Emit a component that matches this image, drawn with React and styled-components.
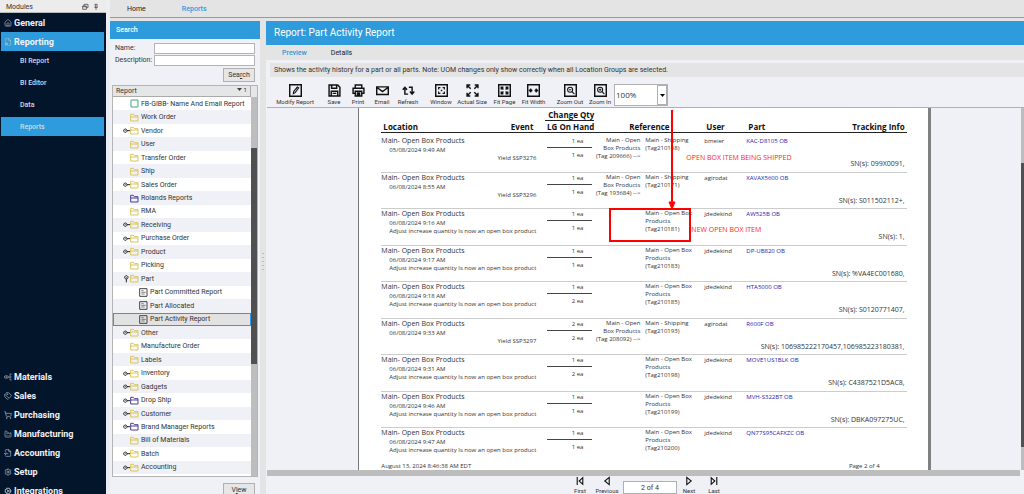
import styled, { createGlobalStyle } from "styled-components";
import { useState } from "react";
import { House, FileCog, Tags, ShoppingCart, Factory, FileOutput, Settings, Cog } from "lucide-react";

const BLUE = "#2d9bdc";
const PANEL = "#eff1f6";
const GREY = "#e4e4e4";

const GlobalStyle = createGlobalStyle`
    *{
        box-sizing:border-box;
    }
    body{
        margin:0;
        background:${GREY};
        color:#333;
        font-family:Roboto, "Liberation Sans", sans-serif;
        font-size:7px;
        line-height:10px;
    }
    button, input, select{
        font:inherit;
        color:inherit;
        margin:0;
        padding:0;
        border:0;
        border-radius:0;
        background:none;
    }
    ul{
        list-style:none;
        margin:0;
        padding:0;
    }
    h1, h2{
        margin:0;
    }
`;

const MaterialsIcon = () => (
    <svg width="8" height="8" viewBox="0 0 24 24" fill="none" stroke="currentColor" strokeWidth="2">
        <ellipse cx="7" cy="12" rx="6" ry="4"/>
        <circle cx="7" cy="12" r="1"/>
        <path d="M13 12h4M23 3h-5v18h5M18 12h5"/>
    </svg>
);

const topModules = [
    { name: "General", Icon: House },
    { name: "Reporting", Icon: FileCog }
];

const subModules = ["BI Report", "BI Editor", "Data", "Reports"];

const bottomModules = [
    { name: "Materials", Icon: MaterialsIcon },
    { name: "Sales", Icon: Tags },
    { name: "Purchasing", Icon: ShoppingCart },
    { name: "Manufacturing", Icon: Factory },
    { name: "Accounting", Icon: FileOutput },
    { name: "Setup", Icon: Settings },
    { name: "Integrations", Icon: Cog }
];

const YELLOW = "#dcc45c";
const PURPLE = "#4c3f94";

const tree = [
    { name: "FB-GIBB- Name And Email Report", icon: "sheet" },
    { name: "Work Order" },
    { name: "Vendor", closed: true },
    { name: "User" },
    { name: "Transfer Order" },
    { name: "Ship" },
    { name: "Sales Order", closed: true },
    { name: "Rolands Reports", color: PURPLE },
    { name: "RMA" },
    { name: "Receiving", closed: true },
    { name: "Purchase Order", closed: true },
    { name: "Product", closed: true },
    { name: "Picking" },
    { name: "Part", open: true },
    { name: "Part Committed Report", icon: "report" },
    { name: "Part Allocated", icon: "report" },
    { name: "Part Activity Report", icon: "report" },
    { name: "Other", closed: true },
    { name: "Manufacture Order" },
    { name: "Labels" },
    { name: "Inventory", closed: true },
    { name: "Gadgets", closed: true },
    { name: "Drop Ship", closed: true, color: PURPLE },
    { name: "Customer", closed: true },
    { name: "Brand Manager Reports", closed: true, color: PURPLE },
    { name: "Bill of Materials" },
    { name: "Batch", closed: true },
    { name: "Accounting", closed: true }
];

const adjust = "Adjust increase quantity Is now an open box product";

const rows = [
    { time: "05/08/2024 9:49 AM", event: "Yield SSP3276", qty: "1 ea", hand: "1 ea", from: "209666", tag: "210168", user: "bmeier", part: "KAC-D8105 OB", sn: "099X0091," },
    { time: "06/08/2024 8:55 AM", event: "Yield SSP3296", qty: "1 ea", hand: "1 ea", from: "193684", tag: "210171", user: "agirodat", part: "XAVAX5600 OB", sn: "S011502112+," },
    { time: "06/08/2024 9:16 AM", event: adjust, qty: "1 ea", hand: "1 ea", tag: "210181", user: "jdedekind", part: "AW525B OB", sn: "1," },
    { time: "06/08/2024 9:17 AM", event: adjust, qty: "1 ea", hand: "1 ea", tag: "210183", user: "jdedekind", part: "DP-UB820 OB", sn: "%VA4EC001680," },
    { time: "06/08/2024 9:18 AM", event: adjust, qty: "1 ea", hand: "2 ea", tag: "210185", user: "jdedekind", part: "HTA5000 OB", sn: "S0120771407," },
    { time: "06/08/2024 9:33 AM", event: "Yield SSP3297", qty: "2 ea", hand: "2 ea", from: "208092", tag: "210193", user: "agirodat", part: "R600F OB", sn: "106985222170457,106985223180381," },
    { time: "06/08/2024 9:31 AM", event: adjust, qty: "1 ea", hand: "2 ea", tag: "210198", user: "jdedekind", part: "MOVE1US1BLK OB", sn: "C4387521D5AC8," },
    { time: "06/08/2024 9:46 AM", event: adjust, qty: "1 ea", hand: "1 ea", tag: "210199", user: "jdedekind", part: "MVH-S322BT OB", sn: "DBKA097275UC," },
    { time: "06/08/2024 9:47 AM", event: adjust, qty: "1 ea", hand: "1 ea", tag: "210200", user: "jdedekind", part: "QN77S95CAFXZC OB" }
];

// toolbar drawings, all on a 36 unit grid
const frame = <path d="M2 2h32v32H2z" strokeWidth="4"/>;
const arrows = "M15 15L9 9M9 15V9h6M21 15l6-6M21 9h6v6M15 21l-6 6M9 21v6h6M21 21l6 6M27 21v6h-6";

const drawings = {
    modify: <>{frame}<path d="M12 27l1-6L23 8l4 3-10 13zM20 12l4 3" strokeWidth="3"/></>,
    save: <path d="M3 3h24l6 6v24H3zM10 4v8h14V4M9 33V20h18v13M13 26h10" strokeWidth="4"/>,
    print: <path d="M9 11V3h18v8M9 26H3V12h30v14h-6M9 20h18v13H9zM13 25h10M13 29h10" strokeWidth="4"/>,
    email: <path d="M2 8h32v21H2zM2 9l16 12L34 9" strokeWidth="4"/>,
    refresh: <path d="M17 28H8V10M2 16l6-7 6 7M19 9h9v18M22 21l6 7 6-7" strokeWidth="4"/>,
    window: <>{frame}<path d="M10 15v-5h5M26 15v-5h-5M10 21v5h5M26 21v5h-5M16 20l4-4" strokeWidth="3"/></>,
    actual: <path d="M3 12V3h9M4 4l9 9M33 12V3h-9M32 4l-9 9M3 24v9h9M4 32l9-9M33 24v9h-9M32 32l-9-9" strokeWidth="4"/>,
    page: <>{frame}<path d={arrows} strokeWidth="4"/></>,
    width: <>{frame}<path d="M8 18h7M21 18h7M12 13l-5 5 5 5M24 13l5 5-5 5" strokeWidth="4"/></>,
    zoomOut: <>{frame}<circle cx="17" cy="16" r="7" strokeWidth="3"/><path d="M22 21l7 7M14 16h6" strokeWidth="3"/></>,
    zoomIn: <>{frame}<circle cx="17" cy="16" r="7" strokeWidth="3"/><path d="M22 21l7 7M14 16h6M17 13v6" strokeWidth="3"/></>,
    first: <path d="M8 4v28M28 6v24L15 18z" strokeWidth="4"/>,
    previous: <path d="M26 5v26L10 18z" strokeWidth="4"/>,
    next: <path d="M10 5v26l16-13z" strokeWidth="4"/>,
    last: <path d="M28 4v28M8 6v24l13-12z" strokeWidth="4"/>
};

const toolGroups = [
    [["modify", "Modify Report", 42]],
    [["save", "Save", 24], ["print", "Print", 24], ["email", "Email", 24], ["refresh", "Refresh", 28]],
    [["window", "Window", 26], ["actual", "Actual Size", 36], ["page", "Fit Page", 29], ["width", "Fit Width", 29]],
    [["zoomOut", "Zoom Out", 32], ["zoomIn", "Zoom In", 28]]
];

const Drawing = ({ name, size }) => (
    <svg width={size} height={size} viewBox="0 0 36 36" fill="none" stroke="#111">{drawings[name]}</svg>
);

const Folder = ({ color = YELLOW }) => (
    <svg width="9" height="9" viewBox="0 0 27 27" fill="none" stroke={color} strokeWidth="3">
        <path d="M2 24V4h8l3 4h11v16zM2 12h22"/>
    </svg>
);

const TreeIcon = ({ icon, color }) => {
    if (icon === "sheet") {
        return <svg width="9" height="9" viewBox="0 0 9 9"><path d="M1 1h7v7H1z" fill="#fff" stroke="#4aa57c"/></svg>;
    }
    if (icon === "report") {
        return (
            <svg width="9" height="9" viewBox="0 0 27 27" fill="none" stroke="#444" strokeWidth="3">
                <path d="M2 2h22v23H2z"/>
                <path d="M7 8h7M7 13h13M7 18h10" strokeWidth="2"/>
            </svg>
        );
    }
    return <Folder color={color}/>;
};

const Expander = ({ closed, open }) => (
    <svg width="7" height="9" viewBox="0 0 21 27" fill="none" stroke="#222" strokeWidth="3">
        {closed && <path d="M12 14h9M7 9a5 5 0 1 0 .1 0M7 13v2"/>}
        {open && <path d="M10 15v10M10 5a5 5 0 1 0 .1 0M10 9v2"/>}
    </svg>
);

const Sidebar = () => {
    const [active, setActive] = useState("Reports");

    return (
        <SidebarBox>
            <ModulesBar>
                <span>Modules</span>
                <svg width="18" height="8" viewBox="0 0 54 24" fill="none" stroke="#333" strokeWidth="2">
                    <path d="M2 9h11v10H2zM6 9V4h12v10h-5M2 11h11M38 4h8M40 4v9M45 4v9M37 13h10M42 13v8"/>
                </svg>
            </ModulesBar>
            {topModules.map(({ name, Icon }) => (
                <ModuleButton key={name} $active={name === "Reporting"}><Icon size={8}/>{name}</ModuleButton>
            ))}
            <SubList>
                {subModules.map((name) => (
                    <SubButton key={name} $active={name === active} onClick={() => setActive(name)}>{name}</SubButton>
                ))}
            </SubList>
            <BottomList>
                {bottomModules.map(({ name, Icon }) => (
                    <ModuleButton key={name}><Icon size={8}/>{name}</ModuleButton>
                ))}
            </BottomList>
        </SidebarBox>
    );
};

const SearchPanel = () => {
    const [selected, setSelected] = useState("Part Activity Report");

    return (
        <SearchBox>
            <SearchTitle>Search</SearchTitle>
            <Form>
                <label htmlFor="name">Name:</label>
                <TextBox id="name"/>
                <label htmlFor="description">Description:</label>
                <TextBox id="description"/>
            </Form>
            <ButtonRow>
                <PushButton>Sea<u>r</u>ch</PushButton>
            </ButtonRow>
            <TreeBox>
                <TreeMain>
                    <TreeHead>
                        <span>Report</span>
                        <small>
                            <svg width="5" height="4" viewBox="0 0 5 4"><path d="M0 0h5L2.500 3z" fill="#345"/></svg> 1
                        </small>
                    </TreeHead>
                    <TreeList>
                        {tree.map((item) => (
                            <TreeItem key={item.name}>
                                <TreeButton
                                    $nested={item.icon === "report"}
                                    $selected={item.name === selected}
                                    onClick={() => setSelected(item.name)}
                                >
                                    <Expander closed={item.closed} open={item.open}/>
                                    <TreeIcon icon={item.icon} color={item.color}/>
                                    <span>{item.name}</span>
                                </TreeButton>
                            </TreeItem>
                        ))}
                        <TreePeek>
                            <TreeButton><Expander closed/><Folder color={PURPLE}/></TreeButton>
                        </TreePeek>
                    </TreeList>
                </TreeMain>
                <TreeScroll><i/><b/><i/></TreeScroll>
            </TreeBox>
            <ButtonRow $last>
                <PushButton>V<u>i</u>ew</PushButton>
            </ButtonRow>
        </SearchBox>
    );
};

const Report = () => (
    <Paper>
        <Table>
            <thead>
                <HeadRow>
                    <th>Location<span>Event</span></th>
                    <QtyHead><span>Change Qty</span>LG On Hand</QtyHead>
                    <RefHead>Reference</RefHead>
                    <th>User</th>
                    <th>Part<span>Tracking Info</span></th>
                </HeadRow>
            </thead>
            <tbody>
                {rows.map((row) => (
                    <Row key={row.tag}>
                        <Location>
                            <div>Main- Open Box Products</div>
                            <Small>{row.time}</Small>
                            <Event>{row.event}</Event>
                        </Location>
                        <Qty><div>{row.qty}</div><div>{row.hand}</div></Qty>
                        <Ref $right>
                            {row.from && <>Main - Open<br/>Box Products<br/>(Tag {row.from}) --&gt;</>}
                        </Ref>
                        <Ref>
                            {row.from ? <>Main - Shipping<br/></> : <>Main - Open Box<br/>Products<br/></>}
                            (Tag{row.tag})
                        </Ref>
                        <Small as="td">{row.user}</Small>
                        <Part>
                            <a href="#part">{row.part}</a>
                            {row.sn && <div>SN(s): {row.sn}</div>}
                        </Part>
                    </Row>
                ))}
            </tbody>
        </Table>
        <PaperFoot><span>August 13, 2024 8:46:38 AM EDT</span><span>Page 2 of 4</span></PaperFoot>
        <Arrow width="10" height="99" viewBox="0 0 10 99">
            <path d="M5 0v94" stroke="#f00" strokeWidth="2"/>
            <path d="M2 92h6L5 99z" fill="#f00" stroke="#f00"/>
        </Arrow>
        <Highlight/>
        <Note $x={327} $y={45}>OPEN BOX ITEM BEING SHIPPED</Note>
        <Note $x={332} $y={117}>NEW OPEN BOX ITEM</Note>
    </Paper>
);

const App = () => {
    const [page, setPage] = useState("2 of 4");

    return (
        <Wrapper>
            <GlobalStyle/>
            <Sidebar/>
            <Main>
                <TopTabs>
                    <TabButton>Home</TabButton>
                    <TabButton $active>Reports</TabButton>
                </TopTabs>
                <Body>
                    <SearchPanel/>
                    <Splitter/>
                    <Content>
                        <Title>Report: Part Activity Report</Title>
                        <ViewTabs>
                            <TabButton $active>Preview</TabButton>
                            <TabButton>Details</TabButton>
                        </ViewTabs>
                        <Info>Shows the activity history for a part or all parts. Note: UOM changes only show correctly when all Location Groups are selected.</Info>
                        <Toolbar>
                            {toolGroups.map((group) => (
                                <ToolGroup key={group[0][0]}>
                                    {group.map(([icon, label, width]) => (
                                        <ToolButton key={icon} $width={width}>
                                            <Drawing name={icon} size={13}/>
                                            {label}
                                        </ToolButton>
                                    ))}
                                    {group[0][0] === "zoomOut" && (
                                        <ZoomBox>
                                            <select aria-label="Zoom" defaultValue="100%">
                                                <option>50%</option>
                                                <option>100%</option>
                                                <option>200%</option>
                                            </select>
                                            <span><svg width="5" height="3" viewBox="0 0 5 3"><path d="M0 0h5L2.500 3z"/></svg></span>
                                        </ZoomBox>
                                    )}
                                </ToolGroup>
                            ))}
                        </Toolbar>
                        <Viewer>
                            <Canvas><Report/></Canvas>
                            <ViewerScroll><i/><b/><i/></ViewerScroll>
                        </Viewer>
                        <BottomScroll/>
                        <Pager>
                            <ToolButton $width={26}><Drawing name="first" size={10}/>First</ToolButton>
                            <ToolButton $width={28}><Drawing name="previous" size={10}/>Previous</ToolButton>
                            <PageInput aria-label="Page" value={page} onChange={(e) => setPage(e.target.value)}/>
                            <ToolButton $width={24}><Drawing name="next" size={10}/>Next</ToolButton>
                            <ToolButton $width={26}><Drawing name="last" size={10}/>Last</ToolButton>
                        </Pager>
                    </Content>
                </Body>
            </Main>
        </Wrapper>
    );
};

export default App;


const Wrapper = styled.div`
    display:flex;
    height:100vh;
    overflow:hidden;
`;

const SidebarBox = styled.nav`
    display:flex;
    flex-direction:column;
    flex:none;
    width:106px;
    background:#03152b;
`;

const ModulesBar = styled.div`
    display:flex;
    flex:none;
    justify-content:space-between;
    align-items:center;
    height:13px;
    padding:1px 6px 0;
    background:#ececec;
    border-bottom:1px solid #bbb;
`;

const ModuleButton = styled.button`
    display:flex;
    flex:none;
    align-items:center;
    gap:2px;
    height:19px;
    margin:0 2px 0 1px;
    padding-left:3px;
    background:${({ $active }) => ($active ? BLUE : "none")};
    color:#f0f2f5;
    font-size:9px;
    font-weight:700;

    svg{
        color:#a9b6c6;
    }
`;

const SubList = styled.div`
    display:flex;
    flex-direction:column;
    gap:3px;
    margin:0 2px 0 1px;
`;

const SubButton = styled.button`
    height:19px;
    padding-left:19px;
    text-align:left;
    font-weight:500;
    background:${({ $active }) => ($active ? BLUE : "none")};
    color:#d5dae1;
`;

const BottomList = styled.div`
    display:flex;
    flex-direction:column;
    margin:auto 0 -6px;
`;

const Main = styled.main`
    display:flex;
    flex:1;
    flex-direction:column;
    min-width:0;
    border-left:4px solid #eceef3;
`;

const TopTabs = styled.div`
    display:flex;
    flex:none;
    gap:36px;
    height:18px;
    padding-left:17px;
    border-bottom:1px solid #999;
`;

const TabButton = styled.button`
    font-weight:${({ $active }) => ($active ? 500 : 400)};
    color:${({ $active }) => ($active ? BLUE : "#222")};
`;

const Body = styled.div`
    display:flex;
    flex:1;
    min-height:0;
    padding-top:3px;
`;

const SearchBox = styled.section`
    display:flex;
    flex-direction:column;
    flex:none;
    width:150px;
    background:${PANEL};
`;

const SearchTitle = styled.h2`
    flex:none;
    padding:0 6px;
    background:${BLUE};
    color:#fff;
    font-size:7px;
    font-weight:500;
    line-height:18px;
`;

const Form = styled.div`
    display:grid;
    grid-template-columns:35px 1fr;
    gap:1px 4px;
    padding:4px 5px 2px;
`;

const TextBox = styled.input`
    min-width:0;
    height:11px;
    background:#fff;
    border:1px solid #b4b4b4;
`;

const ButtonRow = styled.div`
    display:flex;
    flex:none;
    justify-content:flex-end;
    height:17px;
    padding-top:${({ $last }) => ($last ? "6px" : "0")};
    padding-right:5px;
`;

const PushButton = styled.button`
    flex:none;
    width:32px;
    height:14px;
    background:#e6e6e6;
    border:1px solid #b0b0b0;
`;

const TreeBox = styled.div`
    display:flex;
    flex:1;
    min-height:0;
    margin:0 2px;
    border:1px solid #b4b4b4;
`;

const TreeMain = styled.div`
    display:flex;
    flex:1;
    flex-direction:column;
    min-width:0;
`;

const TreeHead = styled.div`
    display:flex;
    flex:none;
    justify-content:space-between;
    height:11px;
    padding:0 3px;
    background:#e6e6e6;
    border-bottom:1px solid #aaa;
    border-right:1px solid #aaa;

    small{
        font-size:6px;
        line-height:8px;
    }
`;

const TreeList = styled.ul`
    display:flex;
    flex:1;
    flex-direction:column;
    min-height:0;
`;

const TreeItem = styled.li`
    flex:1;
    min-height:0;
    background:#fff;

    &:nth-child(even){
        background:${PANEL};
    }
`;

const TreePeek = styled.li`
    flex:none;
    height:2px;
    overflow:hidden;
    background:#fff;

    button{
        height:12px;
    }
`;

const TreeButton = styled.button`
    display:flex;
    align-items:center;
    width:100%;
    height:100%;
    padding-left:${({ $nested }) => ($nested ? "19px" : "10px")};
    background:${({ $selected }) => ($selected ? "#e2e2e2" : "none")};
    box-shadow:${({ $selected }) => ($selected ? `inset 0 0 0 1px ${BLUE}` : "none")};
    white-space:nowrap;

    span{
        margin-left:2px;
    }
`;

const Scroll = styled.div`
    display:flex;
    flex:none;
    flex-direction:column;

    i{
        background:#bdbdbd;
    }
    b{
        background:#505050;
    }
`;

const TreeScroll = styled(Scroll)`
    width:6px;
    border-top:11px solid #e6e6e6;

    i{
        flex:51;
    }
    b{
        flex:217;
    }
    i:last-child{
        flex:112;
    }
`;

const Splitter = styled.div`
    flex:none;
    align-self:center;
    width:2px;
    height:18px;
    margin:8px 2px 0;
    background:repeating-linear-gradient(#bbb 0 1px, transparent 1px 4px);
`;

const Content = styled.section`
    display:flex;
    flex:1;
    flex-direction:column;
    min-width:0;
    background:${PANEL};
`;

const Title = styled.h1`
    flex:none;
    padding-left:8px;
    background:${BLUE};
    color:#fff;
    font-size:10px;
    font-weight:400;
    line-height:24px;
`;

const ViewTabs = styled.div`
    display:flex;
    flex:none;
    gap:24px;
    height:15px;
    padding-left:16px;
    background:${GREY};
`;

const Info = styled.div`
    flex:none;
    margin:3px 0 7px 4px;
    padding-left:4px;
    line-height:14px;
    background:${GREY};
    white-space:nowrap;
`;

const Toolbar = styled.div`
    display:flex;
    flex:none;
    gap:6px;
    height:23px;
    padding-left:8px;
`;

const ToolGroup = styled.div`
    display:flex;
`;

const ToolButton = styled.button`
    display:flex;
    flex:none;
    flex-direction:column;
    align-items:center;
    width:${({ $width }) => $width}px;
    font-size:6px;
    line-height:9px;
    white-space:nowrap;

    svg{
        flex:none;
    }
`;

const ZoomBox = styled.div`
    display:flex;
    width:54px;
    height:22px;
    background:#fff;
    border:1px solid #b0b0b0;
    font:8px/20px "Open Sans", sans-serif;

    select{
        flex:1;
        min-width:0;
        padding-left:1px;
        appearance:none;
    }
    span{
        display:flex;
        align-items:center;
        justify-content:center;
        width:10px;
        border:1px solid #b0b0b0;
    }
`;

const Viewer = styled.div`
    display:flex;
    flex:1;
    min-height:0;
    margin-left:1px;
    border-top:1px solid #b0b0b0;
`;

const Canvas = styled.div`
    display:flex;
    flex:1;
    justify-content:center;
    min-width:0;
    padding-left:1px;
    overflow:hidden;
`;

const ViewerScroll = styled(Scroll)`
    width:3px;

    i{
        flex:55;
    }
    b{
        flex:284;
    }
    i:last-child{
        flex:23;
    }
`;

const Paper = styled.div`
    position:relative;
    display:flex;
    flex-direction:column;
    width:76%;
    padding:0 21px 0 22px;
    background:#fff;
    border-left:1px solid #777;
    border-right:3px solid #808080;
    font-family:"Open Sans", "Noto Sans", sans-serif;
    font-size:7px;
    overflow:hidden;
`;

const Table = styled.table`
    display:flex;
    flex:1;
    flex-direction:column;
    min-height:0;

    tbody{
        display:flex;
        flex:1;
        flex-direction:column;
    }
    th, td{
        padding:0;
        text-align:left;
    }
`;

const HeadRow = styled.tr`
    display:grid;
    grid-template-columns:164px 49px 110px 42px 1fr;
    align-items:end;
    height:25px;
    margin-bottom:3px;
    border-bottom:1px solid #222;
    color:#111;
    font-size:8px;
    line-height:11px;

    th{
        display:flex;
        justify-content:space-between;
        padding:0 2px;
        white-space:nowrap;
    }
    th:first-child{
        padding-right:12px;
    }
`;

const QtyHead = styled.th`
    && {
        display:block;
        padding:0;
        text-align:right;
    }
    span{
        display:block;
        border-bottom:1px solid #222;
    }
`;

const RefHead = styled.th`
    &&{
        justify-content:center;
    }
`;

const Row = styled.tr`
    display:grid;
    grid-template-columns:166px 45px 53px 59px 42px 1fr;
    flex:1;
    border-bottom:1px solid #ccc;

    &:last-child{
        flex:none;
        height:33px;
        border:0;
    }
`;

const Location = styled.td`
    white-space:nowrap;
`;

const Small = styled.div`
    padding-left:8px;
    font-size:6px;
    line-height:8px;

    td&&{
        padding:1px 0;
    }
`;

const Event = styled.div`
    padding-right:11px;
    text-align:right;
    font-size:6px;
    line-height:8px;
`;

const Qty = styled.td`
    font-size:6px;

    div{
        padding-right:9px;
        text-align:right;
        line-height:11px;
    }
    div + div{
        border-top:1px solid #444;
        line-height:15px;
    }
`;

const Ref = styled.td`
    &&{
        padding-right:${({ $right }) => ($right ? "5px" : "0")};
        text-align:${({ $right }) => ($right ? "right" : "left")};
    }
    font-size:6px;
    line-height:8px;
    white-space:nowrap;
`;

const Part = styled.td`
    a{
        display:block;
        color:#2222b4;
        font-size:6px;
        text-decoration:none;
    }
    div{
        padding:13px 2px 0 0;
        text-align:right;
    }
`;

const PaperFoot = styled.div`
    display:flex;
    flex:none;
    justify-content:space-between;
    height:9px;
    padding-right:27px;
    overflow:hidden;
    font-size:6px;
`;

const Arrow = styled.svg`
    position:absolute;
    top:2px;
    left:308px;
`;

const Highlight = styled.div`
    position:absolute;
    top:100px;
    left:250px;
    width:82px;
    height:34px;
    border:2px solid #f00;
`;

const Note = styled.div`
    position:absolute;
    top:${({ $y }) => $y}px;
    left:${({ $x }) => $x}px;
    color:#f22;
    white-space:nowrap;
`;

const BottomScroll = styled.div`
    flex:none;
    height:6px;
    margin:0 4px 0 1px;
    background:#bdbdbd;
`;

const Pager = styled.div`
    display:flex;
    flex:none;
    align-items:flex-start;
    justify-content:center;
    height:18px;
    padding-left:4px;
`;

const PageInput = styled.input`
    width:54px;
    height:13px;
    margin:5px 0 0 2px;
    background:#fff;
    border:1px solid #b0b0b0;
    text-align:center;
`;
